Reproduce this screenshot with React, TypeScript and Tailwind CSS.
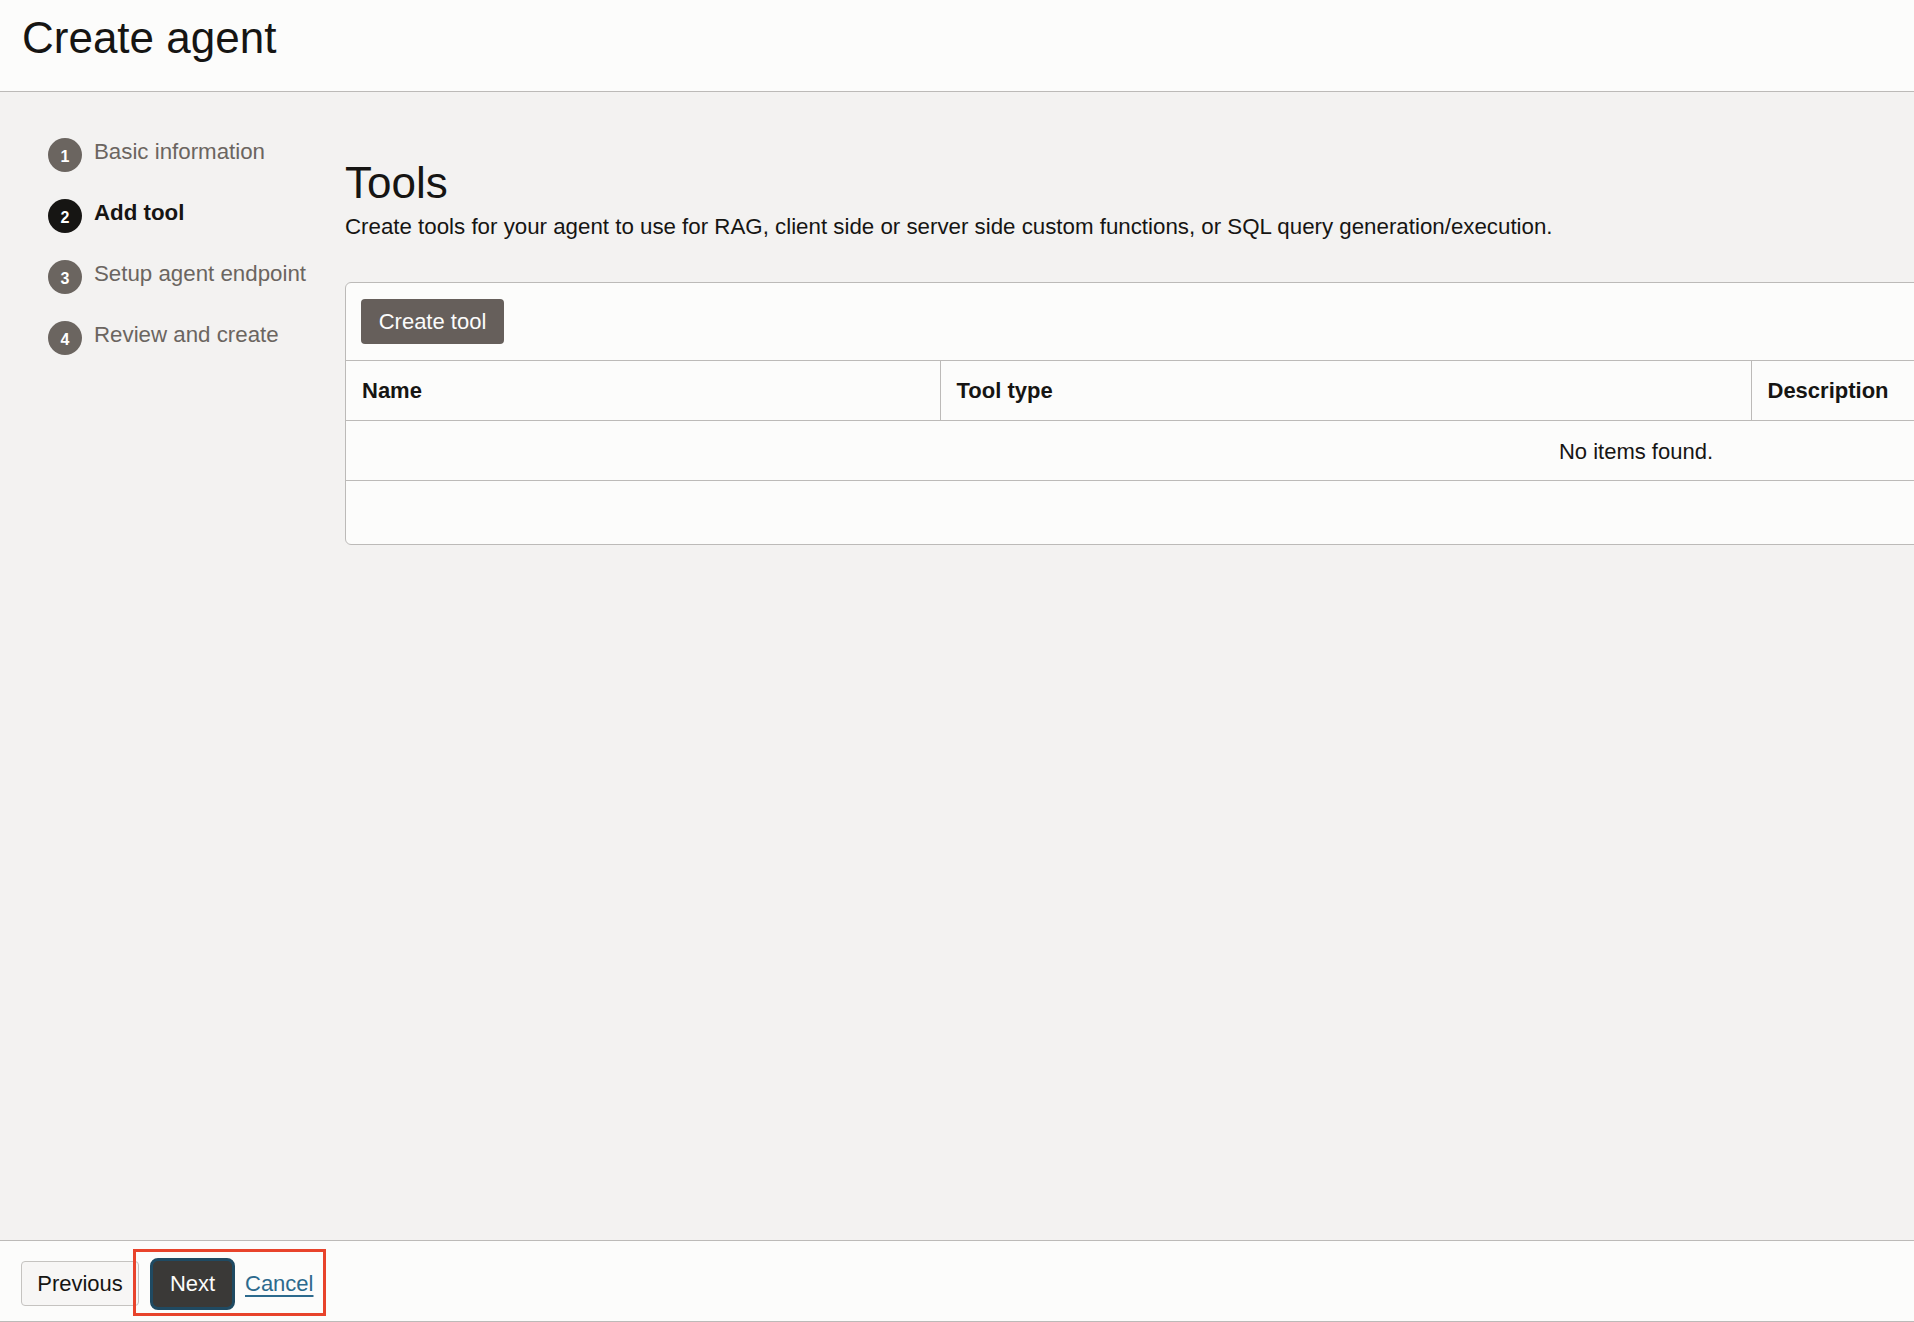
import React from "react";

const steps = [
  { n: 1, label: "Basic information", active: false },
  { n: 2, label: "Add tool", active: true },
  { n: 3, label: "Setup agent endpoint", active: false },
  { n: 4, label: "Review and create", active: false },
];

/* ---------------- STEP LIST ---------------- */
const StepNav = () => (
  <nav className="w-[345px] shrink-0 pl-[48px] pt-[46px] flex flex-col gap-[27px]">
    {steps.map((s) => (
      <div key={s.n} className="flex items-center gap-[12px] h-[34px]">
        <span
          className={`w-[34px] h-[34px] rounded-full flex items-center justify-center text-white text-[16px] font-bold pt-[3px] ${
            s.active ? "bg-[#161513]" : "bg-[#6b6560]"
          }`}
        >
          {s.n}
        </span>
        <span
          className={`text-[22.3px] leading-none mb-[5px] ${
            s.active ? "font-bold text-[#161513]" : "text-[#6b6560]"
          }`}
        >
          {s.label}
        </span>
      </div>
    ))}
  </nav>
);

/* ---------------- TOOLS TABLE ---------------- */
const ToolsTable = () => (
  <div className="w-[2582px] bg-[#fcfcfb] border border-[#bcbab8] rounded-[6px] overflow-hidden">
    <div className="h-[77px] px-[15px] flex items-center">
      <button className="h-[45px] w-[143px] rounded-[4px] bg-[#665f5b] text-[#fcfcfb] text-[22px] leading-none">
        Create tool
      </button>
    </div>
    <table className="table-fixed w-full border-collapse text-[#161513]">
      <colgroup>
        <col className="w-[594px]" />
        <col className="w-[811px]" />
        <col className="w-[580px]" />
        <col />
      </colgroup>
      <thead>
        <tr className="h-[60px] border-t border-b border-[#bcbab8]">
          <th className="text-left font-bold text-[22px] pl-[16px]">Name</th>
          <th className="text-left font-bold text-[22px] pl-[16px] border-l border-[#bcbab8]">
            Tool type
          </th>
          <th className="text-left font-bold text-[22px] pl-[16px] border-l border-[#bcbab8]">
            <span>Description</span>
          </th>
          <th className="text-left font-bold text-[22px] pl-[16px] border-l border-[#bcbab8]">
            Created
          </th>
        </tr>
      </thead>
      <tbody>
        <tr className="h-[60px] border-b border-[#bcbab8]">
          <td colSpan={4} className="text-center text-[22px] pt-[2px]">
            No items found.
          </td>
        </tr>
      </tbody>
    </table>
    <div className="h-[63px]" />
  </div>
);

/* ---------------- MAIN PAGE ---------------- */
export default function App() {
  return (
    <div
      className="w-full h-[1322px] flex flex-col overflow-hidden bg-[#f3f2f1] text-[#161513]"
      style={{ fontFamily: '"Liberation Sans", Arial, sans-serif' }}
    >
      {/* HEADER */}
      <header className="h-[92px] shrink-0 bg-[#fcfcfb] border-b border-[#bcbab8] pl-[22px] pt-[16px]">
        <h1 className="text-[44px] leading-none font-normal">Create agent</h1>
      </header>

      {/* BODY */}
      <main className="flex-1 flex min-h-0">
        <StepNav />
        <section className="flex-1 min-w-0 pt-[69px]">
          <h2 className="text-[44px] leading-none">Tools</h2>
          <p className="mt-[11px] text-[22.3px] leading-none">
            Create tools for your agent to use for RAG, client side or server side custom functions, or SQL query generation/execution.
          </p>
          <div className="mt-[44px]">
            <ToolsTable />
          </div>
        </section>
      </main>

      {/* FOOTER */}
      <footer className="relative h-[82px] shrink-0 bg-[#fcfcfb] border-t border-b border-[#bcbab8] pl-[21px] pt-[5px] flex items-center gap-[11px]">
        <button className="h-[45px] w-[118px] rounded-[4px] border border-[#c5c3c0] bg-[#f7f6f5] text-[22px] leading-none text-[#161513]">
          Previous
        </button>
        <button className="h-[52px] w-[85px] rounded-[8px] border-[3px] border-[#1f4a62] bg-[#3a3937] text-[22px] leading-none text-[#fcfcfb]">
          Next
        </button>
        <a href="#" className="ml-[-1px] text-[22px] leading-none text-[#2c6a8d] underline underline-offset-[4px]">
          Cancel
        </a>
        {/* annotation box */}
        <div className="absolute left-[133px] top-[8px] w-[193px] h-[67px] border-[3px] border-[#e8432b] pointer-events-none" />
      </footer>
    </div>
  );
}
